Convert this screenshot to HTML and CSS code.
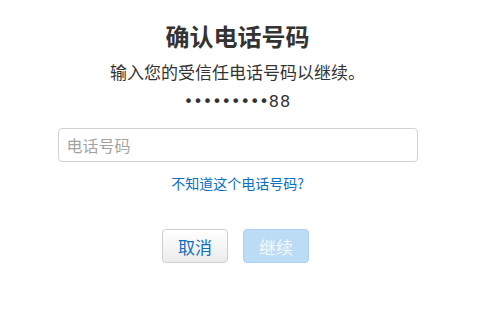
FILE: index.html
```html
<!DOCTYPE html>
<html lang="zh-CN">
<head>
  <meta charset="UTF-8">
  <title>确认电话号码</title>
  <link rel="stylesheet" href="styles.css">
</head>
<body>

  <div class="page">
    <h1>确认电话号码</h1>
    <p class="intro">输入您的受信任电话号码以继续。</p>
    <div class="masked">•••••••••<span class="tail">88</span></div>

    <input class="phone-input" type="tel" placeholder="电话号码" />

    <a class="help-link" href="#">不知道这个电话号码?</a>

    <div class="actions">
      <button class="btn cancel-btn">取消</button>
      <button class="btn next-btn" disabled>继续</button>
    </div>
  </div>

</body>
</html>
```

FILE: styles.css
```css
body {
  margin: 0;
  background: #fff;
  color: #333;
  font-family: "Noto Sans CJK SC", "Noto Sans", sans-serif;
}
.page {
  display: flex;
  flex-direction: column;
  align-items: center;
  padding: 21px 5px 0 0;
}
h1 {
  margin: 0;
  font-size: 24px;
  line-height: 30px;
  font-weight: bold;
  color: #333;
}
.intro {
  margin: 9px 0 0;
  font-size: 17px;
  line-height: 24px;
}
.masked {
  margin-top: 6px;
  font-family: "DejaVu Sans", sans-serif;
  font-size: 16px;
  line-height: 24px;
  color: #333;
}
.masked .tail {
  letter-spacing: 1px;
}
.phone-input {
  box-sizing: border-box;
  margin-top: 14px;
  width: 360px;
  height: 34px;
  padding: 0 8px;
  font-family: inherit;
  font-size: 16px;
  color: #333;
  border: 1px solid #d2d2d2;
  border-radius: 4px;
  outline: none;
}
.phone-input::placeholder {
  color: #a3a3a3;
}
.help-link {
  margin-top: 11px;
  font-size: 14px;
  line-height: 20px;
  color: #0b6fc0;
  text-decoration: none;
}
.actions {
  display: flex;
  gap: 15px;
  margin: 36px 4px 0 0;
}
.btn {
  box-sizing: border-box;
  width: 66px;
  height: 34px;
  padding: 0;
  font-family: inherit;
  font-size: 17px;
  border-radius: 4px;
  cursor: pointer;
}
.cancel-btn {
  background: linear-gradient(#ffffff, #ececec);
  border: 1px solid #cfcfcf;
  color: #0b6fc0;
}
.next-btn {
  background: #bcdcf6;
  border: 1px solid #abd0f0;
  color: #f4f9fe;
  cursor: default;
}
```
